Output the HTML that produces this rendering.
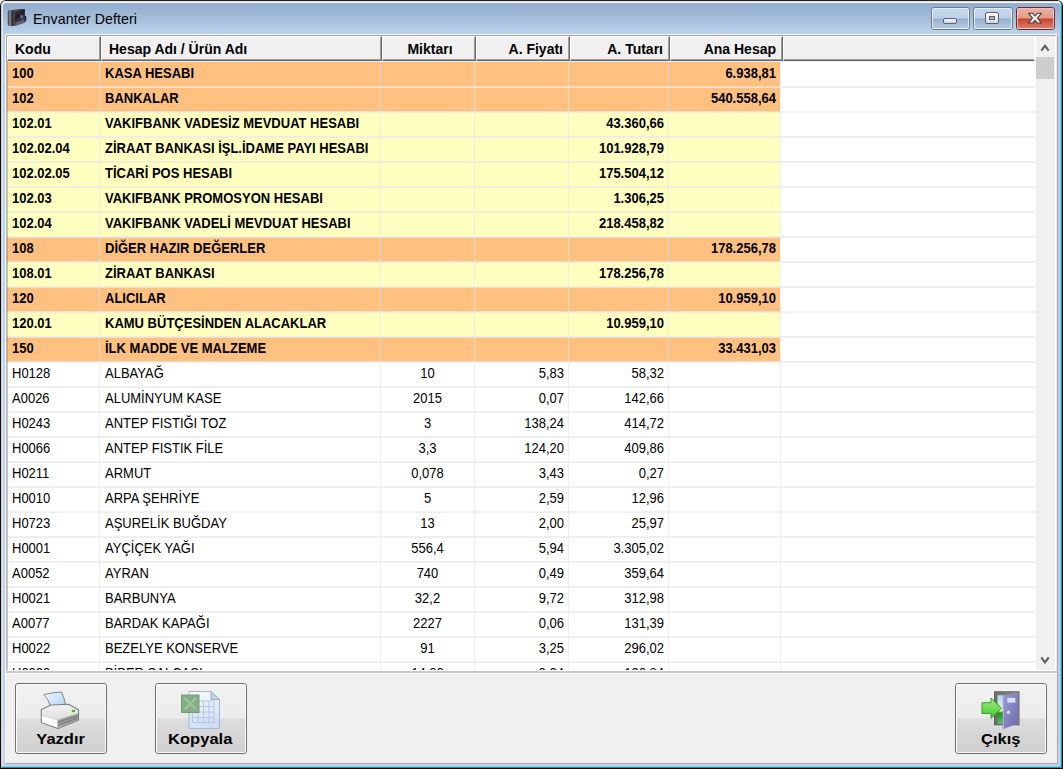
<!DOCTYPE html>
<html><head><meta charset="utf-8">
<style>
html,body{margin:0;padding:0;}
body{width:1063px;height:769px;overflow:hidden;position:relative;background:#fff;font-family:"Liberation Sans",sans-serif;}
.a{position:absolute;box-sizing:border-box;}
/* frame rings */
#r0{left:0;top:0;width:1063px;height:769px;border-style:solid;border-width:1px;border-color:#222 #050505 #000 #111;border-radius:6px 6px 0 0;}
#r1{left:1px;top:1px;width:1061px;height:767px;border-style:solid;border-width:1px;border-color:#dedede #2a8ea6 #2a8ea6 #cccccc;border-radius:5px 5px 0 0;}
#r2{left:2px;top:2px;width:1059px;height:765px;border-style:solid;border-width:1px;border-color:#fdfdfd #7bcdec #7bcdec #dce8f4;border-radius:4px 4px 0 0;}
#r3{left:3px;top:3px;width:1057px;height:763px;background:linear-gradient(to bottom,#91aed0 0px,#9bb6d4 8px,#b9d1ea 30px,#b9d1ea 700px,#c0d4ec 763px);border-radius:3px 3px 0 0;}
#client{left:5px;top:34px;width:1053px;height:730px;border-style:solid;border-width:1px;border-color:#fafcff #a8a8a8 #a8a8a8 #fafcff;background:#f0f0f0;}
#title{left:33px;top:11px;font-size:14.2px;color:#000;white-space:nowrap;letter-spacing:0.1px;}
/* caption buttons */
.cb{top:7px;height:23px;width:39px;border:1px solid #6b7a92;border-radius:3px;}
.cb .hi{left:0;top:0;right:0;bottom:0;border:1px solid rgba(255,255,255,0.65);border-radius:2px;background:linear-gradient(to bottom,#c6d8ec 0,#bcd0e8 9px,#98b2d0 10px,#a8c0dc 15px,#b8cfe8 21px);}
#cmin{left:931px;}
#cmax{left:973px;width:40px;}
#ccl{left:1016px;width:39px;border-color:#6a2a33;}
#ccl .hi{border-color:rgba(255,220,210,0.7);background:linear-gradient(to bottom,#eab0a2 0,#e39a88 9px,#c5432a 10px,#cf5d45 14px,#dd8474 21px);}
/* grid */
#grid{left:6px;top:35px;width:1050px;height:636px;border-style:solid;border-width:1px;border-color:#a0a0a0 #ffffff #ffffff #a0a0a0;background:#fff;overflow:hidden;}
.hc{position:absolute;box-sizing:border-box;top:36px;height:25px;background:#f0f0f0;border-style:solid;border-width:1px;border-color:#ffffff #696969 #696969 #ffffff;}
.hc::after{content:"";position:absolute;left:0;top:0;right:0;bottom:0;border-right:1px solid #a0a0a0;border-bottom:1px solid #a0a0a0;}
.hc.nf::after{border-right:none;}
.ht{position:absolute;top:4px;font-size:14px;font-weight:bold;color:#000;white-space:nowrap;line-height:17px;}
.row{position:absolute;left:7px;width:1028px;height:25px;}
.row .c{position:absolute;top:-1px;line-height:24px;font-size:13px;white-space:nowrap;color:#000;transform:translateY(0.6px) scaleY(1.09);transform-origin:0 17px;}
.row .r{text-align:right;}
.row.b .c{font-weight:bold;}
.rows{position:absolute;left:0;top:0;}
.vl{position:absolute;top:61px;width:1px;height:609px;background:rgba(232,232,232,0.7);}
.hl{position:absolute;left:7px;width:1028px;height:1px;background:rgba(232,232,232,0.7);}
#clip{left:0;top:0;width:1063px;height:670px;overflow:hidden;}
/* scrollbar */
#sb{left:1036px;top:36px;width:19px;height:634px;background:#f0f0f0;}
#thumb{left:1036px;top:57px;width:18px;height:22px;background:#cdcdcd;}
/* bottom */
#sep{left:6px;top:671px;width:1051px;height:2px;background:#c8c8c8;}
#sep2{left:6px;top:673px;width:1051px;height:1px;background:#fafafa;}
.btn{top:683px;width:92px;height:71px;border:1px solid #707070;border-radius:3px;background:linear-gradient(to bottom,#f2f2f2 0,#ebebeb 34px,#dddddd 35px,#cfcfcf 69px);}
.btn::after{content:"";position:absolute;left:0;top:0;right:0;bottom:0;border:1px solid #fcfcfc;border-radius:2px;}
.bt{position:absolute;left:0;width:90px;top:47px;text-align:center;font-size:14px;font-weight:bold;color:#000;white-space:nowrap;line-height:17px;}
.bt span{display:inline-block;transform:scaleX(1.18);}
</style></head>
<body>
<div class="a" id="r0"></div>
<div class="a" id="r1"></div>
<div class="a" id="r2"></div>
<div class="a" id="r3"></div>
<div class="a" id="client"></div>

<!-- title icon -->
<svg class="a" style="left:7px;top:8px" width="20" height="20" viewBox="0 0 20 20">
  <defs>
    <linearGradient id="sp" x1="0" y1="0" x2="1" y2="0"><stop offset="0" stop-color="#3c3c48"/><stop offset="0.35" stop-color="#8a8a90"/><stop offset="0.6" stop-color="#2a2a30"/><stop offset="1" stop-color="#4a4a5c"/></linearGradient>
    <linearGradient id="bd" x1="0" y1="0" x2="0.4" y2="1"><stop offset="0" stop-color="#3a3a3e"/><stop offset="0.5" stop-color="#1e1e24"/><stop offset="1" stop-color="#5a5a6a"/></linearGradient>
  </defs>
  <path d="M0.8,4 Q0.8,2 2.8,2 L7.8,2 L7.8,18 L2.8,18 Q0.8,18 0.8,16 Z" fill="url(#sp)"/>
  <path d="M7.6,1.6 L17.9,1 L17.9,14.8 L7.6,18 Z" fill="url(#bd)"/>
  <path d="M8,1.6 L13,1.3 L12,2.5 L8,2.8 Z" fill="#6a6a72"/>
  <path d="M17.6,7.6 L19.2,8.2 L19.2,13 L17.6,13.8 Z" fill="#16161c"/>
  <ellipse cx="14.6" cy="8.6" rx="1.4" ry="1.9" fill="#6a66c0" opacity="0.9"/>
  <path d="M9,14.5 L17.5,12.2 L17.5,14.6 L9,17.4 Z" fill="#6a6a7a" opacity="0.8"/>
</svg>
<div class="a" id="title">Envanter Defteri</div>

<!-- caption buttons -->
<div class="a cb" id="cmin"><div class="a hi"></div>
  <div class="a" style="left:11px;top:10px;width:14px;height:6px;border:1px solid #5a6478;border-radius:2px;background:linear-gradient(#f4f4f4,#d8d8d8);"></div>
</div>
<div class="a cb" id="cmax"><div class="a hi"></div>
  <div class="a" style="left:11px;top:4px;width:14px;height:12px;border:1px solid #5a6478;border-radius:2px;background:linear-gradient(#ffffff,#d8d8d8);">
    <div class="a" style="left:3px;top:3px;width:6px;height:4px;border:1px solid #5a6478;background:#9fb4d2;"></div>
  </div>
</div>
<div class="a cb" id="ccl"><div class="a hi"></div>
  <svg class="a" style="left:9px;top:3px" width="18" height="14" viewBox="0 0 18 14">
    <path d="M2.6,2.3 L6.7,2.3 L9,5 L11.3,2.3 L15.4,2.3 L11.5,7.2 L15.4,12 L11.3,12 L9,9.4 L6.7,12 L2.6,12 L6.5,7.2 Z" fill="#f2f2f2" stroke="#4e3c44" stroke-width="1.1" stroke-linejoin="round"/>
  </svg>
</div>

<!-- grid -->
<div class="a" id="grid"></div>
<div class="a" id="clip">
<div class="hc" style="left:7px;width:94px"><span class="ht" style="left:7px">Kodu</span></div><div class="hc" style="left:101px;width:281px"><span class="ht" style="left:7px">Hesap Adı / Ürün Adı</span></div><div class="hc" style="left:382px;width:94px"><span class="ht" style="left:0;width:94px;text-align:center">Miktarı</span></div><div class="hc" style="left:476px;width:94px"><span class="ht" style="left:0;width:86px;text-align:right">A. Fiyatı</span></div><div class="hc" style="left:570px;width:100px"><span class="ht" style="left:0;width:92px;text-align:right">A. Tutarı</span></div><div class="hc" style="left:670px;width:113px"><span class="ht" style="left:0;width:105px;text-align:right">Ana Hesap</span></div><div class="hc nf" style="left:783px;width:252px;border-right-color:#fff"></div>
<div class="row b" style="top:62px;background:linear-gradient(to right,#ffc080 0,#ffc080 773px,#fff 773px)">
<span class="c" style="left:5px">100</span>
<span class="c" style="left:98px">KASA HESABI</span>
<span class="c r" style="left:662px;width:107px">6.938,81</span>
</div>
<div class="row b" style="top:87px;background:linear-gradient(to right,#ffc080 0,#ffc080 773px,#fff 773px)">
<span class="c" style="left:5px">102</span>
<span class="c" style="left:98px">BANKALAR</span>
<span class="c r" style="left:662px;width:107px">540.558,64</span>
</div>
<div class="row b" style="top:112px;background:linear-gradient(to right,#ffffc0 0,#ffffc0 773px,#fff 773px)">
<span class="c" style="left:5px">102.01</span>
<span class="c" style="left:98px">VAKIFBANK VADESİZ MEVDUAT HESABI</span>
<span class="c r" style="left:562px;width:95px">43.360,66</span>
</div>
<div class="row b" style="top:137px;background:linear-gradient(to right,#ffffc0 0,#ffffc0 773px,#fff 773px)">
<span class="c" style="left:5px">102.02.04</span>
<span class="c" style="left:98px">ZİRAAT BANKASI İŞL.İDAME PAYI HESABI</span>
<span class="c r" style="left:562px;width:95px">101.928,79</span>
</div>
<div class="row b" style="top:162px;background:linear-gradient(to right,#ffffc0 0,#ffffc0 773px,#fff 773px)">
<span class="c" style="left:5px">102.02.05</span>
<span class="c" style="left:98px">TİCARİ POS HESABI</span>
<span class="c r" style="left:562px;width:95px">175.504,12</span>
</div>
<div class="row b" style="top:187px;background:linear-gradient(to right,#ffffc0 0,#ffffc0 773px,#fff 773px)">
<span class="c" style="left:5px">102.03</span>
<span class="c" style="left:98px">VAKIFBANK PROMOSYON HESABI</span>
<span class="c r" style="left:562px;width:95px">1.306,25</span>
</div>
<div class="row b" style="top:212px;background:linear-gradient(to right,#ffffc0 0,#ffffc0 773px,#fff 773px)">
<span class="c" style="left:5px">102.04</span>
<span class="c" style="left:98px">VAKIFBANK VADELİ MEVDUAT HESABI</span>
<span class="c r" style="left:562px;width:95px">218.458,82</span>
</div>
<div class="row b" style="top:237px;background:linear-gradient(to right,#ffc080 0,#ffc080 773px,#fff 773px)">
<span class="c" style="left:5px">108</span>
<span class="c" style="left:98px">DİĞER HAZIR DEĞERLER</span>
<span class="c r" style="left:662px;width:107px">178.256,78</span>
</div>
<div class="row b" style="top:262px;background:linear-gradient(to right,#ffffc0 0,#ffffc0 773px,#fff 773px)">
<span class="c" style="left:5px">108.01</span>
<span class="c" style="left:98px">ZİRAAT BANKASI</span>
<span class="c r" style="left:562px;width:95px">178.256,78</span>
</div>
<div class="row b" style="top:287px;background:linear-gradient(to right,#ffc080 0,#ffc080 773px,#fff 773px)">
<span class="c" style="left:5px">120</span>
<span class="c" style="left:98px">ALICILAR</span>
<span class="c r" style="left:662px;width:107px">10.959,10</span>
</div>
<div class="row b" style="top:312px;background:linear-gradient(to right,#ffffc0 0,#ffffc0 773px,#fff 773px)">
<span class="c" style="left:5px">120.01</span>
<span class="c" style="left:98px">KAMU BÜTÇESİNDEN ALACAKLAR</span>
<span class="c r" style="left:562px;width:95px">10.959,10</span>
</div>
<div class="row b" style="top:337px;background:linear-gradient(to right,#ffc080 0,#ffc080 773px,#fff 773px)">
<span class="c" style="left:5px">150</span>
<span class="c" style="left:98px">İLK MADDE VE MALZEME</span>
<span class="c r" style="left:662px;width:107px">33.431,03</span>
</div>
<div class="row n" style="top:362px;background:linear-gradient(to right,#ffffff 0,#ffffff 773px,#fff 773px)">
<span class="c" style="left:5px">H0128</span>
<span class="c" style="left:98px">ALBAYAĞ</span>
<span class="c" style="left:374px;width:93px;text-align:center">10</span>
<span class="c r" style="left:468px;width:89px">5,83</span>
<span class="c r" style="left:562px;width:95px">58,32</span>
</div>
<div class="row n" style="top:387px;background:linear-gradient(to right,#ffffff 0,#ffffff 773px,#fff 773px)">
<span class="c" style="left:5px">A0026</span>
<span class="c" style="left:98px">ALUMİNYUM KASE</span>
<span class="c" style="left:374px;width:93px;text-align:center">2015</span>
<span class="c r" style="left:468px;width:89px">0,07</span>
<span class="c r" style="left:562px;width:95px">142,66</span>
</div>
<div class="row n" style="top:412px;background:linear-gradient(to right,#ffffff 0,#ffffff 773px,#fff 773px)">
<span class="c" style="left:5px">H0243</span>
<span class="c" style="left:98px">ANTEP FISTIĞI TOZ</span>
<span class="c" style="left:374px;width:93px;text-align:center">3</span>
<span class="c r" style="left:468px;width:89px">138,24</span>
<span class="c r" style="left:562px;width:95px">414,72</span>
</div>
<div class="row n" style="top:437px;background:linear-gradient(to right,#ffffff 0,#ffffff 773px,#fff 773px)">
<span class="c" style="left:5px">H0066</span>
<span class="c" style="left:98px">ANTEP FISTIK FİLE</span>
<span class="c" style="left:374px;width:93px;text-align:center">3,3</span>
<span class="c r" style="left:468px;width:89px">124,20</span>
<span class="c r" style="left:562px;width:95px">409,86</span>
</div>
<div class="row n" style="top:462px;background:linear-gradient(to right,#ffffff 0,#ffffff 773px,#fff 773px)">
<span class="c" style="left:5px">H0211</span>
<span class="c" style="left:98px">ARMUT</span>
<span class="c" style="left:374px;width:93px;text-align:center">0,078</span>
<span class="c r" style="left:468px;width:89px">3,43</span>
<span class="c r" style="left:562px;width:95px">0,27</span>
</div>
<div class="row n" style="top:487px;background:linear-gradient(to right,#ffffff 0,#ffffff 773px,#fff 773px)">
<span class="c" style="left:5px">H0010</span>
<span class="c" style="left:98px">ARPA ŞEHRİYE</span>
<span class="c" style="left:374px;width:93px;text-align:center">5</span>
<span class="c r" style="left:468px;width:89px">2,59</span>
<span class="c r" style="left:562px;width:95px">12,96</span>
</div>
<div class="row n" style="top:512px;background:linear-gradient(to right,#ffffff 0,#ffffff 773px,#fff 773px)">
<span class="c" style="left:5px">H0723</span>
<span class="c" style="left:98px">AŞURELİK BUĞDAY</span>
<span class="c" style="left:374px;width:93px;text-align:center">13</span>
<span class="c r" style="left:468px;width:89px">2,00</span>
<span class="c r" style="left:562px;width:95px">25,97</span>
</div>
<div class="row n" style="top:537px;background:linear-gradient(to right,#ffffff 0,#ffffff 773px,#fff 773px)">
<span class="c" style="left:5px">H0001</span>
<span class="c" style="left:98px">AYÇİÇEK YAĞI</span>
<span class="c" style="left:374px;width:93px;text-align:center">556,4</span>
<span class="c r" style="left:468px;width:89px">5,94</span>
<span class="c r" style="left:562px;width:95px">3.305,02</span>
</div>
<div class="row n" style="top:562px;background:linear-gradient(to right,#ffffff 0,#ffffff 773px,#fff 773px)">
<span class="c" style="left:5px">A0052</span>
<span class="c" style="left:98px">AYRAN</span>
<span class="c" style="left:374px;width:93px;text-align:center">740</span>
<span class="c r" style="left:468px;width:89px">0,49</span>
<span class="c r" style="left:562px;width:95px">359,64</span>
</div>
<div class="row n" style="top:587px;background:linear-gradient(to right,#ffffff 0,#ffffff 773px,#fff 773px)">
<span class="c" style="left:5px">H0021</span>
<span class="c" style="left:98px">BARBUNYA</span>
<span class="c" style="left:374px;width:93px;text-align:center">32,2</span>
<span class="c r" style="left:468px;width:89px">9,72</span>
<span class="c r" style="left:562px;width:95px">312,98</span>
</div>
<div class="row n" style="top:612px;background:linear-gradient(to right,#ffffff 0,#ffffff 773px,#fff 773px)">
<span class="c" style="left:5px">A0077</span>
<span class="c" style="left:98px">BARDAK KAPAĞI</span>
<span class="c" style="left:374px;width:93px;text-align:center">2227</span>
<span class="c r" style="left:468px;width:89px">0,06</span>
<span class="c r" style="left:562px;width:95px">131,39</span>
</div>
<div class="row n" style="top:637px;background:linear-gradient(to right,#ffffff 0,#ffffff 773px,#fff 773px)">
<span class="c" style="left:5px">H0022</span>
<span class="c" style="left:98px">BEZELYE KONSERVE</span>
<span class="c" style="left:374px;width:93px;text-align:center">91</span>
<span class="c r" style="left:468px;width:89px">3,25</span>
<span class="c r" style="left:562px;width:95px">296,02</span>
</div>
<div class="row n" style="top:662px;background:linear-gradient(to right,#ffffff 0,#ffffff 773px,#fff 773px)">
<span class="c" style="left:5px">H0030</span>
<span class="c" style="left:98px">BİBER SALÇASI</span>
<span class="c" style="left:374px;width:93px;text-align:center">14,80</span>
<span class="c r" style="left:468px;width:89px">9,24</span>
<span class="c r" style="left:562px;width:95px">136,84</span>
</div>
<div class="hl" style="top:61px"></div><div class="hl" style="top:86px;height:2px"></div><div class="hl" style="top:111px;height:2px"></div><div class="hl" style="top:136px;height:2px"></div><div class="hl" style="top:161px;height:2px"></div><div class="hl" style="top:186px;height:2px"></div><div class="hl" style="top:211px;height:2px"></div><div class="hl" style="top:236px;height:2px"></div><div class="hl" style="top:261px;height:2px"></div><div class="hl" style="top:286px;height:2px"></div><div class="hl" style="top:311px;height:2px"></div><div class="hl" style="top:336px;height:2px"></div><div class="hl" style="top:361px;height:2px"></div><div class="hl" style="top:386px;height:2px"></div><div class="hl" style="top:411px;height:2px"></div><div class="hl" style="top:436px;height:2px"></div><div class="hl" style="top:461px;height:2px"></div><div class="hl" style="top:486px;height:2px"></div><div class="hl" style="top:511px;height:2px"></div><div class="hl" style="top:536px;height:2px"></div><div class="hl" style="top:561px;height:2px"></div><div class="hl" style="top:586px;height:2px"></div><div class="hl" style="top:611px;height:2px"></div><div class="hl" style="top:636px;height:2px"></div><div class="hl" style="top:661px;height:2px"></div><div class="hl" style="top:686px;height:2px"></div>
<div class="vl" style="left:99px"></div><div class="vl" style="left:380px"></div><div class="vl" style="left:474px"></div><div class="vl" style="left:568px"></div><div class="vl" style="left:668px"></div><div class="vl" style="left:780px"></div>
</div>
<div class="a" style="left:7px;top:61px;width:1px;height:609px;background:rgba(120,120,120,0.4)"></div>
<div class="a" style="left:6px;top:61px;width:1px;height:610px;background:#b4b4b4"></div>
<div class="a" id="sb"></div>
<div class="a" id="thumb"></div>
<svg class="a" style="left:1039px;top:42px" width="12" height="10" viewBox="0 0 12 10">
  <path d="M2.3,8.6 L6,3.8 L9.7,8.6" fill="none" stroke="#606060" stroke-width="2.1"/>
</svg>
<svg class="a" style="left:1039px;top:655px" width="12" height="10" viewBox="0 0 12 10">
  <path d="M2.3,2.4 L6,7.4 L9.7,2.4" fill="none" stroke="#606060" stroke-width="2.1"/>
</svg>

<div class="a" id="sep"></div>
<div class="a" id="sep2"></div>

<!-- buttons -->
<div class="a btn" style="left:15px">
  <svg class="a" style="left:24px;top:6px" width="42" height="40" viewBox="0 0 42 40">
    <defs><linearGradient id="pap" x1="0" y1="0" x2="1" y2="1"><stop offset="0" stop-color="#f4f8ff"/><stop offset="1" stop-color="#a8d0f6"/></linearGradient>
    <linearGradient id="ptop" x1="0" y1="0" x2="0" y2="1"><stop offset="0" stop-color="#f0f0f0"/><stop offset="1" stop-color="#d8d8d8"/></linearGradient></defs>
    <path d="M4,4.5 Q12,2.5 21.5,2 Q24,7 25.5,14 L11,18 Q9,10 4,4.5 Z" fill="url(#pap)" stroke="#7a7a7a" stroke-width="0.9"/>
    <path d="M1.3,19.5 L11,15 L28.5,14.2 L38.5,19.8 L38.5,30 L18,38.5 L1.3,32.5 Z" fill="url(#ptop)" stroke="#808080" stroke-width="1.1" stroke-linejoin="round"/>
    <path d="M2,25.5 L17.5,29.8 L17.5,37.5 L2,32.2 Z" fill="#ffffff"/>
    <path d="M17.5,29.8 L38,23.5 L38,30 L17.5,37.6 Z" fill="#9c9c9c"/>
    <path d="M18.5,32 L37.5,25.8 M18.5,34.8 L37.5,28.3" stroke="#747474" stroke-width="1"/>
    <path d="M2,25.5 L17.5,29.8 L38,23.5" fill="none" stroke="#c8c8c8" stroke-width="0.8"/>
    <ellipse cx="33.5" cy="21" rx="1.9" ry="1.3" fill="#38c038"/>
  </svg>
  <div class="bt"><span>Yazdır</span></div>
</div>
<div class="a btn" style="left:155px">
  <svg class="a" style="left:25px;top:7px" width="40" height="40" viewBox="0 0 40 40">
    <defs><linearGradient id="doc" x1="0" y1="0" x2="0.3" y2="1"><stop offset="0" stop-color="#fbfdff"/><stop offset="1" stop-color="#d0def2"/></linearGradient></defs>
    <path d="M8,0.5 L30,0.5 L38.5,8.5 L38.5,37.5 L8,37.5 Z" fill="url(#doc)" stroke="#a4b8d4" stroke-width="1"/>
    <path d="M30,0.5 L30,8.5 L38.5,8.5 Z" fill="#c4d4ea" stroke="#9cb0cc" stroke-width="1"/>
    <g stroke="#b4c8e4" stroke-width="1.1" fill="none">
      <rect x="11.5" y="10" width="21.5" height="21.5"/>
      <path d="M11.5,15.5 H33 M11.5,21 H33 M11.5,26.5 H33 M17,10 V31.5 M22.5,10 V31.5 M28,10 V31.5"/>
    </g>
    <rect x="0.5" y="4" width="17.5" height="17.5" fill="#86ae86" stroke="#72a072" stroke-width="1"/>
    <path d="M3.5,7 L15,18.5 M15,7 L3.5,18.5" stroke="#a2c2a2" stroke-width="2.2"/>
  </svg>
  <div class="bt" style="left:-1px"><span>Kopyala</span></div>
</div>
<div class="a btn" style="left:955px">
  <svg class="a" style="left:25px;top:7px" width="40" height="40" viewBox="0 0 40 40">
    <defs>
      <linearGradient id="sky" x1="0" y1="0" x2="0" y2="1"><stop offset="0" stop-color="#a8d8f8"/><stop offset="0.45" stop-color="#e8f0d8"/><stop offset="0.55" stop-color="#f0f0b0"/><stop offset="0.62" stop-color="#189818"/><stop offset="1" stop-color="#58c058"/></linearGradient>
      <linearGradient id="arr" x1="0" y1="0" x2="0" y2="1"><stop offset="0" stop-color="#98f47c"/><stop offset="1" stop-color="#4cc234"/></linearGradient>
      <linearGradient id="dr" x1="0" y1="0" x2="1" y2="1"><stop offset="0" stop-color="#9a9ad6"/><stop offset="1" stop-color="#6c6cae"/></linearGradient>
      <linearGradient id="fr" x1="0" y1="0" x2="1" y2="0"><stop offset="0" stop-color="#6a6a6a"/><stop offset="1" stop-color="#9a9a9a"/></linearGradient>
    </defs>
    <rect x="13.5" y="0.8" width="24.5" height="33" fill="url(#fr)" stroke="#5e5e5e" stroke-width="1"/>
    <rect x="16.5" y="4.2" width="5.5" height="28.5" fill="url(#sky)"/>
    <path d="M21.8,4.2 L37,2.8 L37,32.5 L21.8,38.2 Z" fill="url(#dr)"/>
    <path d="M21.8,4.2 L23,4.1 L23,37.7 L21.8,38.2 Z" fill="#a8a8e0"/>
    <rect x="26.3" y="6.9" width="8" height="4.7" fill="#dcdcfa"/>
    <circle cx="27.5" cy="21.3" r="1.7" fill="#e4e4e4"/>
    <path d="M1,11.8 L10,11.8 L10,7 L20.5,17.2 L10,27.4 L10,22.5 L1,22.5 Z" fill="url(#arr)" stroke="#2fa01f" stroke-width="1" stroke-linejoin="round"/>
  </svg>
  <div class="bt"><span>Çıkış</span></div>
</div>
</body></html>
